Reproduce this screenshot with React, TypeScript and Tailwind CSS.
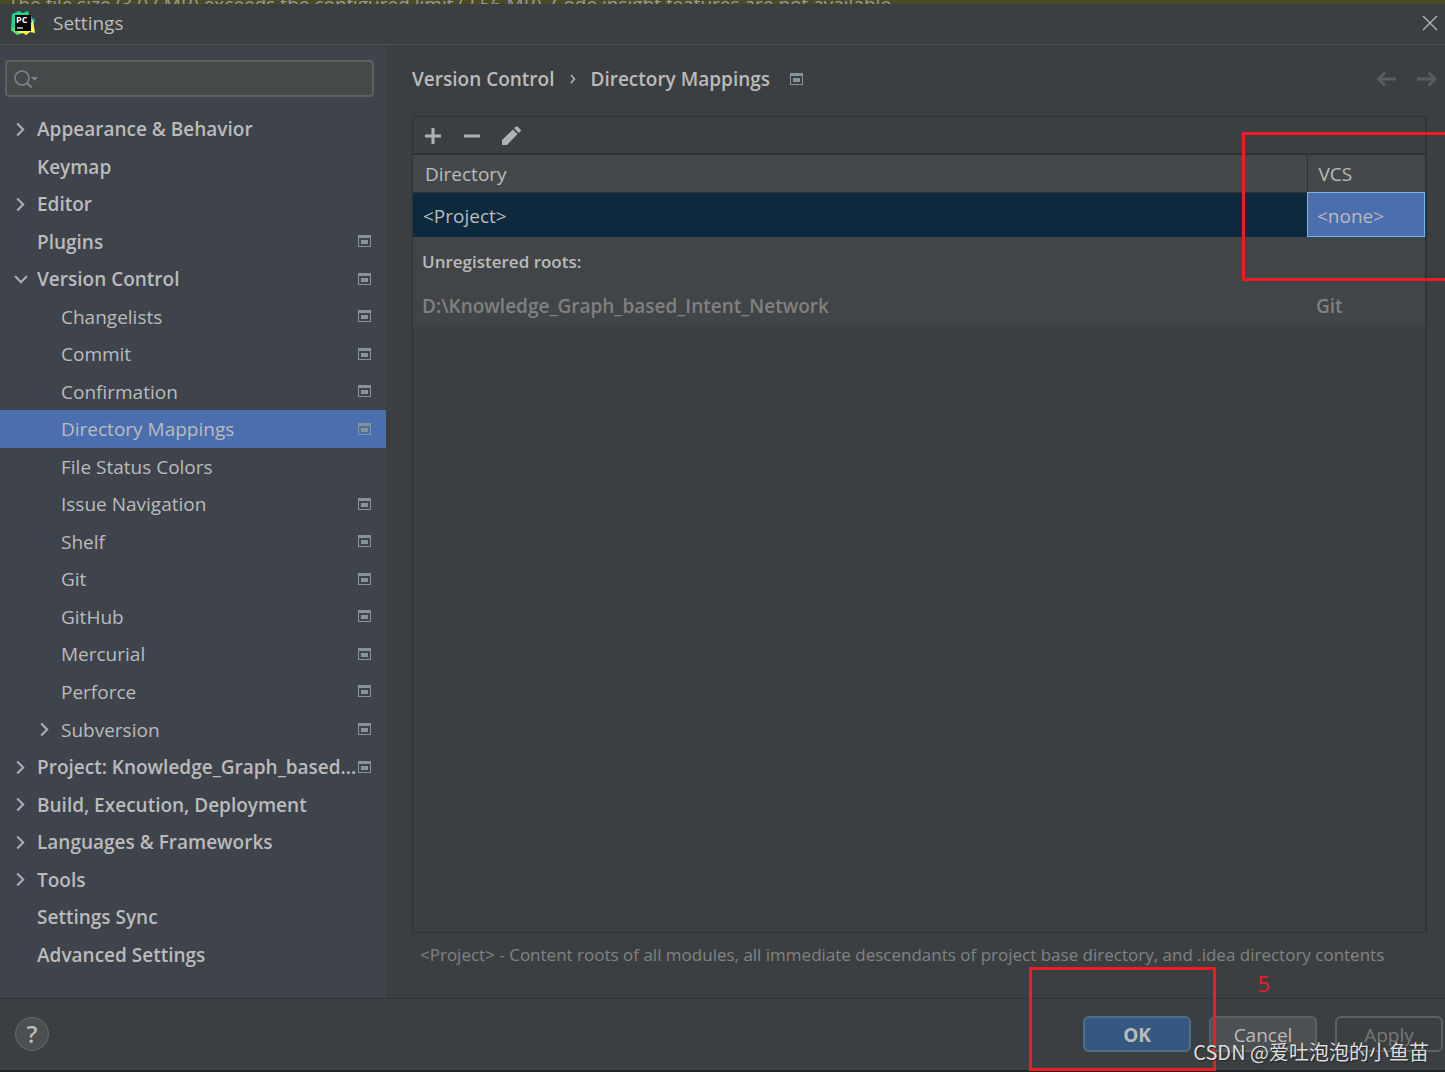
import React, { useState } from 'react';

interface TreeItem {
  label: string;
  level: number;
  arrow?: 'open' | 'closed';
  project?: boolean;
}

const items: TreeItem[] = [
  { label: 'Appearance & Behavior', level: 0, arrow: 'closed' },
  { label: 'Keymap', level: 0 },
  { label: 'Editor', level: 0, arrow: 'closed' },
  { label: 'Plugins', level: 0, project: true },
  { label: 'Version Control', level: 0, arrow: 'open', project: true },
  { label: 'Changelists', level: 1, project: true },
  { label: 'Commit', level: 1, project: true },
  { label: 'Confirmation', level: 1, project: true },
  { label: 'Directory Mappings', level: 1, project: true },
  { label: 'File Status Colors', level: 1 },
  { label: 'Issue Navigation', level: 1, project: true },
  { label: 'Shelf', level: 1, project: true },
  { label: 'Git', level: 1, project: true },
  { label: 'GitHub', level: 1, project: true },
  { label: 'Mercurial', level: 1, project: true },
  { label: 'Perforce', level: 1, project: true },
  { label: 'Subversion', level: 1, arrow: 'closed', project: true },
  { label: 'Project: Knowledge_Graph_based...', level: 0, arrow: 'closed', project: true },
  { label: 'Build, Execution, Deployment', level: 0, arrow: 'closed' },
  { label: 'Languages & Frameworks', level: 0, arrow: 'closed' },
  { label: 'Tools', level: 0, arrow: 'closed' },
  { label: 'Settings Sync', level: 0 },
  { label: 'Advanced Settings', level: 0 },
];

const ProjectIcon: React.FC = () => (
  <svg className="h-3 w-[13px] shrink-0" viewBox="0 0 13 12" fill="none" shapeRendering="crispEdges" aria-hidden="true">
    <path d="M0 0h13v12H0zM1 3v8h11V3z" fill="#87939a" fillRule="evenodd" />
    <path d="M3 5h7v4H3z" fill="#87939a" />
  </svg>
);

const Arrow: React.FC<{ kind?: 'open' | 'closed' }> = ({ kind }) => (
  <svg className="h-4 w-4 shrink-0" viewBox="0 0 16 16" fill="none" stroke="#adb0b3" strokeWidth="2" aria-hidden="true">
    {kind === 'closed' && <path d="M5.200 2.500l6 6-6 6" />}
    {kind === 'open' && <path d="M3 5l6 6.200 6-6.200" />}
  </svg>
);

const Logo: React.FC = () => (
  <svg className="h-6 w-6" viewBox="0 0 24 24" aria-hidden="true">
    <path d="M1 3l7-3 4 2 5-2 1 4 3 3-4 10-12 5-5-3z" fill="#21d789" />
    <path d="M20 6l4 3-2 4-4 4z" fill="#07c3f2" />
    <path d="M7 20l11-4 4-7 2 13-5-1-4 3-3-2-5 1z" fill="#fcf84a" />
    <path d="M0 19l5-2 4 6-3 1z" fill="#59e56a" />
    <rect x="4" y="4" width="16" height="16" fill="#000" />
    <path d="M6 17h6" stroke="#fff" strokeWidth="1.200" />
    <text x="5" y="12" fill="#fff" fontSize="9" fontWeight="700" fontFamily="Open Sans, sans-serif">PC</text>
  </svg>
);

const App: React.FC = () => {
  const [selected, setSelected] = useState('Directory Mappings');
  const [query, setQuery] = useState('');

  return (
    <div className="relative flex min-h-screen flex-col overflow-hidden bg-[#3c3f41] font-['Open_Sans','Noto_Sans_CJK_SC',sans-serif] text-[19px] leading-6 text-[#bbbbbb]">
      {/* Editor banner showing behind the dialog */}
      <div className="h-1 overflow-hidden bg-[#4c4a24] px-2 leading-4 whitespace-nowrap text-[#9a9c98]">
        <p className="-mt-1">
          The file size (3.07 MB) exceeds the configured limit (2.56 MB). Code insight features are not available.
        </p>
      </div>

      {/* Title bar */}
      <header className="flex h-[41px] items-center border-b border-[#515151] pr-[7px] pb-0.5 pl-[11px]">
        <Logo />
        <h1 className="ml-[18px] flex-1">Settings</h1>
        <button type="button" aria-label="Close">
          <svg className="h-4 w-4" viewBox="0 0 16 16" stroke="#b4b6b7" strokeWidth="1.300" aria-hidden="true">
            <path d="M1 1l14 14M15 1L1 15" />
          </svg>
        </button>
      </header>

      <div className="flex flex-1">
        {/* Sidebar */}
        <aside className="flex w-[386px] shrink-0 flex-col bg-[#3e434c] pt-[15px] pb-[25px]">
          <label className="mr-3 mb-[13px] ml-[5px] flex h-[37px] items-center rounded border-2 border-[#5e6162] bg-[#45494a] px-[7px]">
            <svg className="h-5 w-6 shrink-0" viewBox="0 0 24 20" fill="none" aria-hidden="true">
              <circle cx="8" cy="9" r="7" stroke="#7b868c" strokeWidth="1.600" />
              <path d="M13 14l4.500 4.500" stroke="#7b868c" strokeWidth="2" />
              <path d="M17 8h7l-3.500 4z" fill="#7b868c" />
            </svg>
            <input
              type="text"
              aria-label="Search settings"
              value={query}
              onChange={(e) => setQuery(e.target.value)}
              className="w-full bg-transparent pl-1 focus:outline-none"
            />
          </label>

          <ul className="flex flex-1 flex-col">
            {items.map((item) => (
              <li key={item.label} className="flex flex-1">
                <button
                  type="button"
                  onClick={() => setSelected(item.label)}
                  className={`flex w-full items-center gap-[9px] pr-[15px] text-left ${
                    item.level === 0 ? 'pl-3 font-semibold' : 'pl-9'
                  } ${selected === item.label ? 'bg-[#4b6eaf]' : ''}`}
                >
                  <Arrow kind={item.arrow} />
                  <span className="min-w-0 flex-1 pt-px whitespace-nowrap">{item.label}</span>
                  {item.project && <ProjectIcon />}
                </button>
              </li>
            ))}
          </ul>
        </aside>

        {/* Content */}
        <main className="flex min-w-0 flex-1 flex-col pr-[18px] pb-[31px] pl-[26px]">
          <div className="flex h-[71px] items-center pb-[3px]">
            <h2 className="flex items-center font-semibold">
              <span>Version Control</span>
              <svg className="mx-[14px] h-3 w-2" viewBox="0 0 8 12" fill="none" stroke="#bbbbbb" strokeWidth="1.500" aria-hidden="true">
                <path d="M3 2l3.500 4L3 10" />
              </svg>
              <span className="mr-5">Directory Mappings</span>
              <ProjectIcon />
            </h2>
            <div className="-mr-2.5 ml-auto flex gap-5">
              <button type="button" aria-label="Back" disabled>
                <svg className="h-5 w-5" viewBox="0 0 20 20" fill="none" stroke="#5a5d5e" strokeWidth="2.800" aria-hidden="true">
                  <path d="M19 10H2M8 3.500L1.500 10 8 16.500" />
                </svg>
              </button>
              <button type="button" aria-label="Forward" disabled>
                <svg className="h-5 w-5" viewBox="0 0 20 20" fill="none" stroke="#5a5d5e" strokeWidth="2.800" aria-hidden="true">
                  <path d="M0 10h17M11.500 3.500l6.500 6.500-6.500 6.500" />
                </svg>
              </button>
            </div>
          </div>

          <section className="flex-1 border border-r-2 border-[#323232]">
            <div className="flex h-[38px] items-center gap-[19px] border-b-2 border-[#323232] px-2.5 pt-px">
              <button type="button" aria-label="Add">
                <svg className="h-5 w-5" viewBox="0 0 20 20" stroke="#afb1b3" strokeWidth="3" aria-hidden="true">
                  <path d="M2 10h16M10 2v16" />
                </svg>
              </button>
              <button type="button" aria-label="Remove">
                <svg className="h-5 w-5" viewBox="0 0 20 20" stroke="#afb1b3" strokeWidth="3" aria-hidden="true">
                  <path d="M2 10h16" />
                </svg>
              </button>
              <button type="button" aria-label="Edit">
                <svg className="h-5 w-5" viewBox="0 0 20 20" fill="#afb1b3" aria-hidden="true">
                  <path d="M1 19v-5L12 3.500l4.500 4.500L6 19zM13.200 2.300l1.500-1.500q1-1 2 0l2.700 2.700q1 1 0 2l-1.600 1.500z" />
                </svg>
              </button>
            </div>
            <table className="w-full table-fixed border-collapse text-left">
              <colgroup>
                <col />
                <col className="w-[118px]" />
              </colgroup>
              <thead>
                <tr className="h-[37px] border-b border-[#323232] bg-[#45484a]">
                  <th className="px-3 pt-0.5 font-normal">Directory</th>
                  <th className="border-l border-[#323232] px-[11px] pt-0.5 font-normal">VCS</th>
                </tr>
              </thead>
              <tbody>
                <tr className="h-[45px] bg-[#0d293e]">
                  <td className="px-2.5 pt-0.5">&lt;Project&gt;</td>
                  <td className="bg-[#4b6eaf] px-2.5 pt-0.5 outline -outline-offset-1 outline-[#6fb5f7]">&lt;none&gt;</td>
                </tr>
                <tr className="h-[45px] bg-[#414547] text-[17px] font-semibold">
                  <td className="px-[9px] pt-1">Unregistered roots:</td>
                  <td />
                </tr>
                <tr className="h-[45px] bg-[#414547] font-semibold text-[#808080]">
                  <td className="px-[9px] pt-0.5">D:\Knowledge_Graph_based_Intent_Network</td>
                  <td className="px-[9px] pt-0.5">Git</td>
                </tr>
              </tbody>
            </table>
          </section>
          <p className="mt-2.5 pl-2 text-[17px] text-[#808384]">
            &lt;Project&gt; - Content roots of all modules, all immediate descendants of project base directory, and .idea directory contents
          </p>
        </main>
      </div>

      {/* Footer */}
      <footer className="flex h-[74px] items-center border-t border-b-2 border-t-[#323232] border-b-[#222222] pr-0.5 pb-0.5 pl-[15px]">
        <button
          type="button"
          aria-label="Help"
          className="flex h-[34px] w-[34px] items-center justify-center rounded-full border border-[#65696b] bg-[#4c5052] text-2xl font-semibold"
        >
          ?
        </button>
        <div className="ml-auto flex gap-[18px]">
          <button type="button" className="h-9 w-[108px] rounded-md border-2 border-[#4c708c] bg-[#365880] pt-0.5 font-bold">
            OK
          </button>
          <button type="button" className="h-9 w-[108px] rounded-md border-2 border-[#5e6060] bg-[#4c5052] pt-0.5">
            Cancel
          </button>
          <button type="button" disabled className="h-9 w-[108px] rounded-md border-2 border-[#5e6060] pt-0.5 text-[#777777]">
            Apply
          </button>
        </div>
      </footer>

      {/* Annotations drawn over the dialog */}
      <div className="pointer-events-none absolute top-[132px] -right-1 h-[149px] w-[207px] border-3 border-[#ed1c24]" />
      <div className="pointer-events-none absolute right-[229px] bottom-px h-[104px] w-[187px] border-3 border-[#ed1c24]" />
      <span className="absolute right-[175px] bottom-[77px] text-[22px] text-[#ed1c24]">5</span>
      <span className="absolute right-4 bottom-2 font-['Noto_Sans_CJK_SC',sans-serif] text-[20px] whitespace-nowrap text-[#dddddd] [text-shadow:1px_1px_1px_#222]">
        CSDN @爱吐泡泡的小鱼苗
      </span>
    </div>
  );
};

export default App;
